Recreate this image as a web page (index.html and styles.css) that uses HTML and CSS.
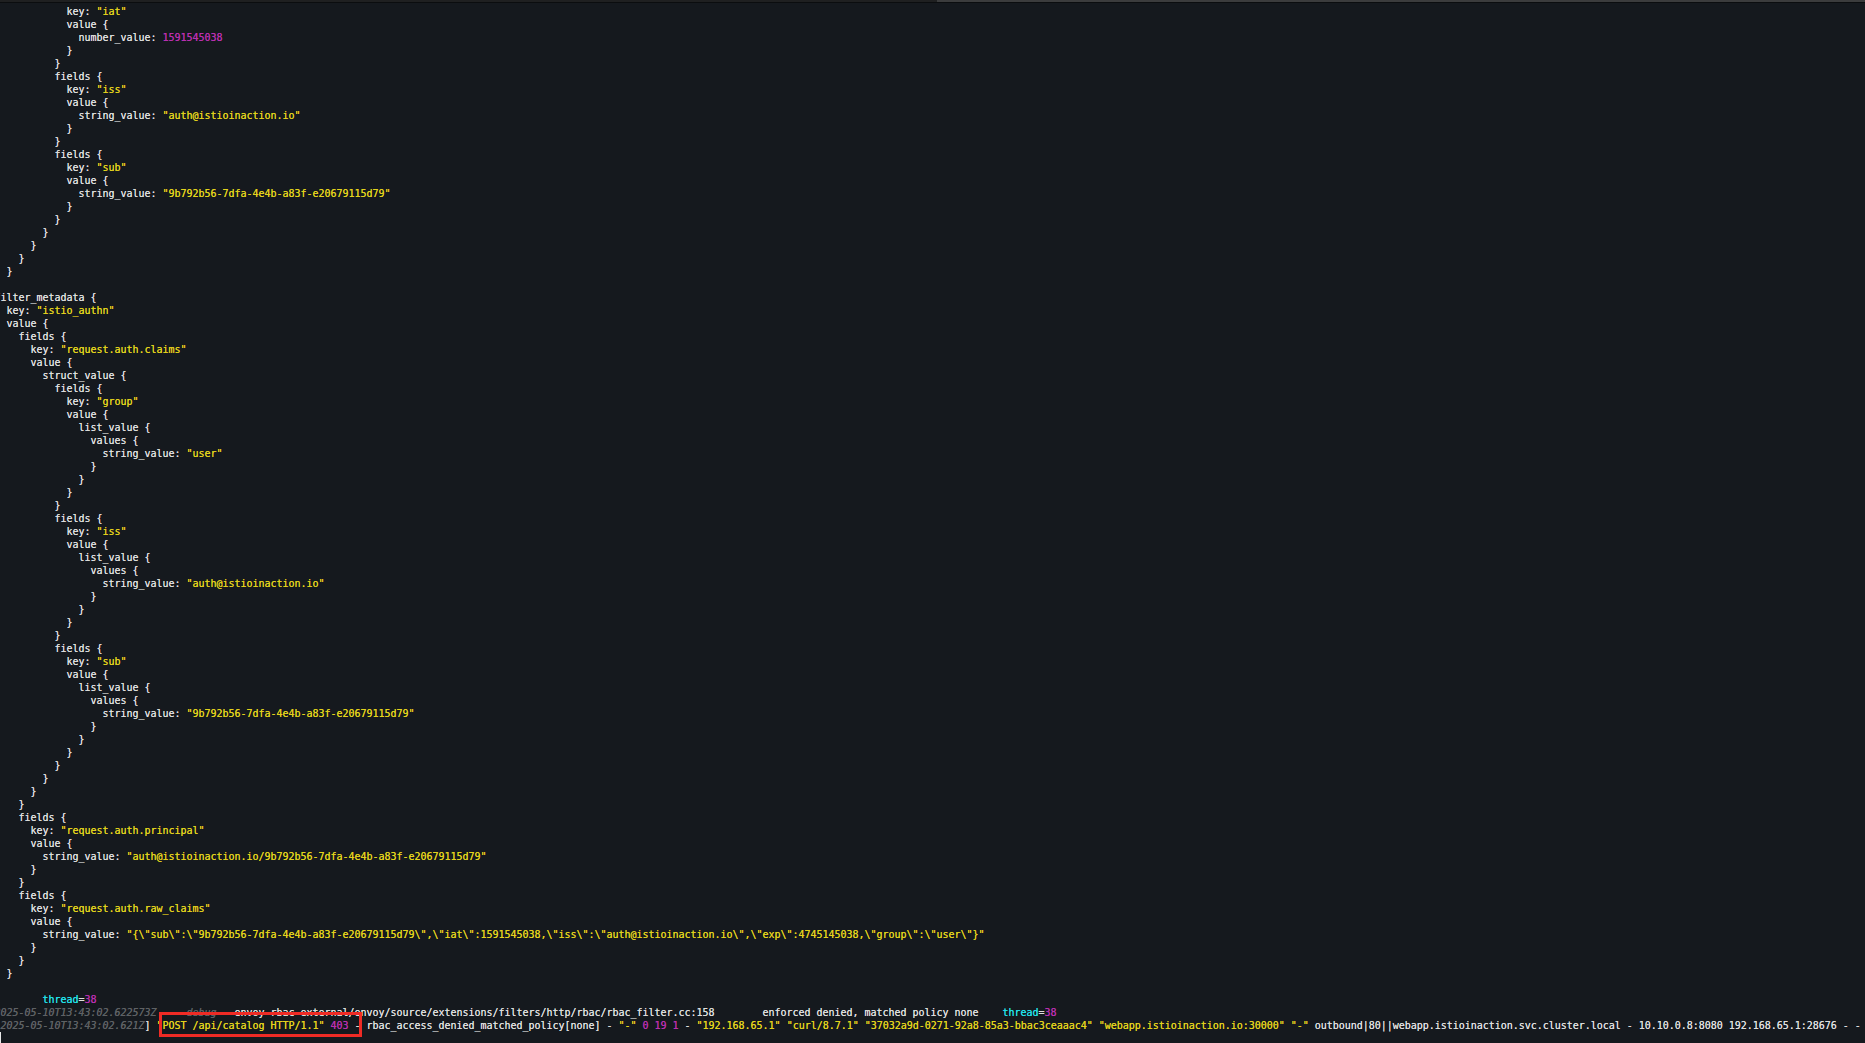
FILE: index.html
```html
<!DOCTYPE html>
<html lang="en">
<head>
<meta charset="utf-8">
<title>Terminal</title>
<link rel="stylesheet" href="styles.css">
</head>
<body>
<div class="terminal">
<div class="tabbar"><div class="tab-left"></div><div class="tab-right"></div></div>
<pre class="log">            key: <span class="s">"iat"</span>
            value {
              number_value: <span class="n">1591545038</span>
            }
          }
          fields {
            key: <span class="s">"iss"</span>
            value {
              string_value: <span class="s">"auth@istioinaction.io"</span>
            }
          }
          fields {
            key: <span class="s">"sub"</span>
            value {
              string_value: <span class="s">"9b792b56-7dfa-4e4b-a83f-e20679115d79"</span>
            }
          }
        }
      }
    }
  }

filter_metadata {
  key: <span class="s">"istio_authn"</span>
  value {
    fields {
      key: <span class="s">"request.auth.claims"</span>
      value {
        struct_value {
          fields {
            key: <span class="s">"group"</span>
            value {
              list_value {
                values {
                  string_value: <span class="s">"user"</span>
                }
              }
            }
          }
          fields {
            key: <span class="s">"iss"</span>
            value {
              list_value {
                values {
                  string_value: <span class="s">"auth@istioinaction.io"</span>
                }
              }
            }
          }
          fields {
            key: <span class="s">"sub"</span>
            value {
              list_value {
                values {
                  string_value: <span class="s">"9b792b56-7dfa-4e4b-a83f-e20679115d79"</span>
                }
              }
            }
          }
        }
      }
    }
    fields {
      key: <span class="s">"request.auth.principal"</span>
      value {
        string_value: <span class="s">"auth@istioinaction.io/9b792b56-7dfa-4e4b-a83f-e20679115d79"</span>
      }
    }
    fields {
      key: <span class="s">"request.auth.raw_claims"</span>
      value {
        string_value: <span class="s">"{\"sub\":\"9b792b56-7dfa-4e4b-a83f-e20679115d79\",\"iat\":1591545038,\"iss\":\"auth@istioinaction.io\",\"exp\":4745145038,\"group\":\"user\"}"</span>
      }
    }
  }

        <span class="c">thread</span>=<span class="n">38</span>
<span class="d">2025-05-10T13:43:02.622573Z	debug</span>	envoy rbac external/envoy/source/extensions/filters/http/rbac/rbac_filter.cc:158	enforced denied, matched policy none	<span class="c">thread</span>=<span class="n">38</span>
[<span class="d">2025-05-10T13:43:02.621Z</span>] <span class="s">"POST /api/catalog HTTP/1.1"</span> <span class="n">403</span> - rbac_access_denied_matched_policy[none] - <span class="s">"-"</span> <span class="n">0 19 1</span> - <span class="s">"192.168.65.1"</span> <span class="s">"curl/8.7.1"</span> <span class="s">"37032a9d-0271-92a8-85a3-bbac3ceaaac4"</span> <span class="s">"webapp.istioinaction.io:30000"</span> <span class="s">"-"</span> outbound|80||webapp.istioinaction.svc.cluster.local - 10.10.0.8:8080 192.168.65.1:28676 - -</pre>
<div class="highlight"></div>
<div class="cursor"></div>
</div>
</body>
</html>
```
FILE: styles.css
```css
html, body {
  margin: 0;
  padding: 0;
  height: 100%;
  background: #15191e;
}
.terminal {
  position: relative;
  width: 1865px;
  height: 1043px;
  overflow: hidden;
  background: #15191e;
}
.tabbar {
  display: flex;
  height: 2px;
  border-bottom: 1px solid #0b0d0f;
}
.tab-left {
  width: 937px;
  background: #1f2021;
}
.tab-right {
  flex: 1;
  background: #3b3c3d;
}
.log {
  margin: 0 0 0 -5.6px;
  padding-top: 2px;
  font-family: "DejaVu Sans Mono", monospace;
  font-size: 10px;
  letter-spacing: -0.02px;
  line-height: 13px;
  tab-size: 8;
  white-space: pre;
  color: #dedede;
  text-shadow: 0 0 0.6px currentColor;
}
.s { color: #e3d21c; }
.n { color: #b92fae; }
.c { color: #22e0ea; }
.d { color: #5e6164; font-style: italic; }
.highlight {
  position: absolute;
  left: 159px;
  top: 1012px;
  width: 197px;
  height: 19px;
  border: 3px solid #ef2b25;
}
.cursor {
  position: absolute;
  left: 0;
  top: 1032px;
  width: 1px;
  height: 11px;
  background: #e8e8e8;
}
```
